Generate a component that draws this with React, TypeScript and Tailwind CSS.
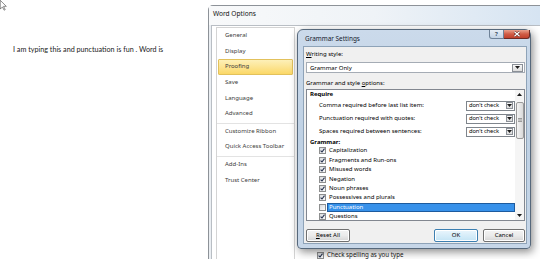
import React from "react";

const Tri = ({ up = false }: { up?: boolean }) => (
  <svg viewBox="0 0 5 3" className="h-[3px] w-[5px]">
    <path d={up ? "M0 3 L2.5 0 L5 3 Z" : "M0 0 L5 0 L2.5 3 Z"} fill="#1c1c1c" />
  </svg>
);

const Check = ({ on }: { on: boolean }) => (
  <span className="flex h-[7px] w-[7px] shrink-0 items-center justify-center border border-[#8e8f8f] bg-gradient-to-br from-[#d9dbde] to-[#fbfbfb]">
    {on && (
      <svg viewBox="0 0 5 5" className="h-[5px] w-[5px]">
        <path d="M0.6 2.6 L2 4 L4.5 0.6" fill="none" stroke="#26324f" strokeWidth="1.1" />
      </svg>
    )}
  </span>
);

const Select = () => (
  <div className="flex h-[10px] w-[49px] shrink-0 items-center border border-[#7f858c] bg-white">
    <span className="flex-1 whitespace-nowrap pl-[2px] text-[5.8px] leading-none tracking-[-0.1px]">don't check</span>
    <span className="mr-[1px] flex h-[7px] w-[7px] shrink-0 items-center justify-center border border-[#8b9097] bg-gradient-to-b from-[#f7f7f7] to-[#dadada]">
      <Tri />
    </span>
  </div>
);

const Cursor = () => (
  <svg viewBox="0 0 12 19" className="absolute left-0 top-0 h-[10.5px] w-[6.6px]">
    <path
      d="M0.5 0.5 L0.5 16.5 L4.5 12.5 L7.5 18.5 L9.5 17.5 L6.5 11.5 L11.5 11.5 Z"
      fill="white"
      stroke="#333"
      strokeWidth="1"
    />
  </svg>
);

const navItems = [
  "General",
  "Display",
  "Proofing",
  "Save",
  "Language",
  "Advanced",
  "-",
  "Customize Ribbon",
  "Quick Access Toolbar",
  "-",
  "Add-Ins",
  "Trust Center",
];

const requireRows = [
  "Comma required before last list item:",
  "Punctuation required with quotes:",
  "Spaces required between sentences:",
];

const grammarRows: [string, boolean][] = [
  ["Capitalization", true],
  ["Fragments and Run-ons", true],
  ["Misused words", true],
  ["Negation", true],
  ["Noun phrases", true],
  ["Possessives and plurals", true],
  ["Punctuation", false],
  ["Questions", true],
];

function WordOptions() {
  return (
    <div className="mt-[5px] flex min-w-0 flex-1 flex-col rounded-tl-[5px] border-l border-t border-[#8d9298] bg-[#eaeef2]">
      <div className="h-[19px] shrink-0 bg-gradient-to-r from-[#f8f9fa] via-[#eff3f7] to-[#d6e4f2] pl-[4px] pt-[3px] text-[6.6px] leading-[10px] text-[#111]">
        Word Options
      </div>
      <div className="ml-[2px] flex flex-1 border-l border-t border-[#b9bec4] bg-white">
        <nav className="ml-[4px] mt-[1px] w-[79px] shrink-0 whitespace-nowrap border border-[#d4d4d4] bg-white text-[6px] text-[#3c3c3c]">
          {navItems.map((item, idx) =>
            item === "-" ? (
              <div key={idx} className="mt-[1px] h-px bg-[#e3e3e3]" />
            ) : item === "Proofing" ? (
              <div
                key={idx}
                className="mx-[1px] flex h-[15.6px] items-center rounded-[1px] border border-[#e2c15c] bg-gradient-to-b from-[#fdf0b8] to-[#fbd866] px-[6px]"
              >
                {item}
              </div>
            ) : (
              <div key={idx} className="flex h-[15.6px] items-center px-[8px]">
                {item}
              </div>
            )
          )}
        </nav>
        <div className="flex-1 pl-[22px] pt-[224px]">
          <div className="flex h-[10px] items-center gap-[3px] whitespace-nowrap text-[6.2px] text-[#1a1a1a]">
            <Check on />
            <span>Check spelling as you type</span>
          </div>
        </div>
      </div>
    </div>
  );
}

function GrammarSettings() {
  return (
    <div className="absolute left-[297px] top-[29px] flex h-[220px] w-[234px] flex-col rounded-b-[4px] rounded-t-[6px] border border-[#56687b] bg-gradient-to-b from-[#cbdaeb] via-[#bfd1e4] to-[#c6d6e8] pb-[4px] pl-[5px] pr-[3px] shadow-[2px_3px_8px_rgba(0,0,0,0.45)]">
      {/* title bar */}
      <div className="flex h-[16px] shrink-0 items-start justify-between">
        <span className="pl-[2px] pt-[4px] text-[6.4px] leading-[9px] text-[#15202c]">Grammar Settings</span>
        <div className="-mr-[3px] flex">
          <div className="flex h-[9px] w-[15px] items-center justify-center rounded-bl-[3px] border border-t-0 border-[#6f8298] bg-gradient-to-b from-[#e6edf5] to-[#c3d3e5] text-[6px] font-bold leading-none text-[#3a4d62]">
            ?
          </div>
          <div className="flex h-[9px] w-[26px] items-center justify-center rounded-br-[3px] border border-l-0 border-t-0 border-[#6d2b25] bg-gradient-to-b from-[#e8a08c] via-[#d05c46] to-[#c1402c]">
            <svg viewBox="0 0 8 6" className="h-[6px] w-[8px]">
              <path d="M1.5 0.8 L6.5 5.2 M6.5 0.8 L1.5 5.2" stroke="#5a1d16" strokeWidth="2.4" />
              <path d="M1.5 0.8 L6.5 5.2 M6.5 0.8 L1.5 5.2" stroke="#fff" strokeWidth="1.3" />
            </svg>
          </div>
        </div>
      </div>

      {/* client */}
      <div className="flex flex-1 flex-col whitespace-nowrap border border-[#8ea3b8] bg-[#f0f0f0] pl-[2px] pr-[1px] pt-[2px] text-[6px] text-black">
        <span className="h-[10px] leading-[10px]">
          <u>W</u>riting style:
        </span>
        <div className="mt-[3px] flex h-[11px] items-center border border-[#a5acb5] bg-white pl-[3px] pr-[1px]">
          <span className="flex-1 leading-none">Grammar Only</span>
          <span className="flex h-[8px] w-[11px] items-center justify-center border border-[#8a8f96] bg-gradient-to-b from-[#f7f7f7] to-[#dcdcdc]">
            <Tri />
          </span>
        </div>
        <span className="mt-[5px] h-[10px] leading-[10px]">
          Grammar and style <u>o</u>ptions:
        </span>

        {/* list */}
        <div className="mt-[1px] flex h-[132px] shrink-0 border border-[#828790] bg-white">
          <div className="flex min-w-0 flex-1 flex-col overflow-hidden">
            <div className="h-[9px] shrink-0 pl-[3px] font-bold leading-[9px]">Require</div>
            {requireRows.map((label) => (
              <div key={label} className="flex h-[13px] shrink-0 items-center justify-between pl-[12px]">
                <span>{label}</span>
                <Select />
              </div>
            ))}
            <div className="h-[8px] shrink-0 pl-[3px] font-bold leading-[8px]">Grammar:</div>
            {grammarRows.map(([label, on]) => (
              <div key={label} className="flex h-[9.45px] shrink-0 items-center pl-[12px]">
                <Check on={on} />
                {label === "Punctuation" ? (
                  <span className="ml-[1px] flex h-full flex-1 items-center border border-[#1d5b9e] bg-[#3791ea] pl-[1px] text-white">
                    {label}
                  </span>
                ) : (
                  <span className="ml-[1px] flex h-full flex-1 items-center pl-[2px]">{label}</span>
                )}
              </div>
            ))}
          </div>
          {/* scrollbar */}
          <div className="flex w-[9px] shrink-0 flex-col items-center bg-[#f5f5f5]">
            <div className="flex h-[9px] items-center">
              <Tri up />
            </div>
            <div className="mt-[3px] flex h-[37px] w-[8px] items-center justify-center rounded-[2px] border border-[#9b9b9b] bg-gradient-to-r from-[#f4f4f4] to-[#d9d9d9]">
              <svg viewBox="0 0 4 5" className="h-[5px] w-[4px]">
                <path d="M0 0.5 H4 M0 2 H4 M0 3.5 H4" stroke="#7d7d7d" strokeWidth="0.7" />
              </svg>
            </div>
            <div className="flex-1" />
            <div className="flex h-[9px] items-center">
              <Tri />
            </div>
          </div>
        </div>

        {/* buttons */}
        <div className="mt-[8px] flex h-[13px] shrink-0">
          <button className="flex w-[44px] items-center justify-center rounded-[2px] border border-[#707070] bg-gradient-to-b from-[#f3f3f3] via-[#ebebeb] to-[#d5d5d5] shadow-[inset_0_0_0_1px_#fff]">
            <span>
              <u>R</u>eset All
            </span>
          </button>
          <div className="flex-1" />
          <button className="flex w-[44px] items-center justify-center rounded-[2px] border border-[#3c7fb1] bg-gradient-to-b from-[#eaf6fd] to-[#c4e4f5] shadow-[inset_0_0_0_1px_#fff]">
            OK
          </button>
          <button className="ml-[5px] flex w-[42px] items-center justify-center rounded-[2px] border border-[#707070] bg-gradient-to-b from-[#f3f3f3] via-[#ebebeb] to-[#d5d5d5] shadow-[inset_0_0_0_1px_#fff]">
            Cancel
          </button>
        </div>
      </div>
    </div>
  );
}

export default function App() {
  return (
    <div className="relative flex h-[259px] w-[540px] overflow-hidden bg-white font-['Noto_Sans',sans-serif] text-black">
      <Cursor />
      <div className="w-[208px] shrink-0 pl-[13px] pt-[46px] font-['Lato',sans-serif] text-[7.2px] leading-[8px] text-[#222]">
        I am typing this and punctuation is fun . Word is
      </div>
      <WordOptions />
      <GrammarSettings />
    </div>
  );
}
